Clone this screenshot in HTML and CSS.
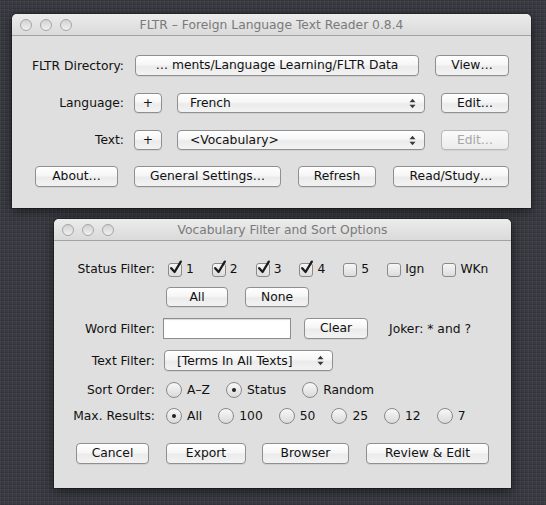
FILE: index.html
```html
<!DOCTYPE html>
<html>
<head>
<meta charset="utf-8">
<link rel="stylesheet" href="styles.css">
</head>
<body>
<div class="desktop">
  <div class="window w1">
    <div class="titlebar">
      <div class="lights"><span></span><span></span><span></span></div>
      <div class="title">FLTR – Foreign Language Text Reader 0.8.4</div>
    </div>
    <div class="content c1">
      <div class="row">
        <div class="lbl l1">FLTR Directory:</div>
        <div class="btn path">… ments/Language Learning/FLTR Data</div>
        <div class="btn view">View…</div>
      </div>
      <div class="row">
        <div class="lbl l1">Language:</div>
        <div class="btn plus">+</div>
        <div class="combo c-lang"><span>French</span><svg class="arr" width="7" height="11" viewBox="0 0 7 11"><path d="M0.5 4.2 L3.5 0.8 L6.5 4.2 Z M0.5 6.8 L3.5 10.2 L6.5 6.8 Z" fill="#3a3a3a"/></svg></div>
        <div class="btn edit">Edit…</div>
      </div>
      <div class="row">
        <div class="lbl l1">Text:</div>
        <div class="btn plus">+</div>
        <div class="combo c-lang"><span>&lt;Vocabulary&gt;</span><svg class="arr" width="7" height="11" viewBox="0 0 7 11"><path d="M0.5 4.2 L3.5 0.8 L6.5 4.2 Z M0.5 6.8 L3.5 10.2 L6.5 6.8 Z" fill="#3a3a3a"/></svg></div>
        <div class="btn edit disabled">Edit…</div>
      </div>
      <div class="row">
        <div class="btn about">About…</div>
        <div class="btn general">General Settings…</div>
        <div class="btn refresh">Refresh</div>
        <div class="btn read">Read/Study…</div>
      </div>
    </div>
  </div>

  <div class="window w2">
    <div class="titlebar">
      <div class="lights"><span></span><span></span><span></span></div>
      <div class="title">Vocabulary Filter and Sort Options</div>
    </div>
    <div class="content c2">
      <div class="row r-status">
        <div class="lbl l2">Status Filter:</div>
        <div class="checks">
          <label class="ck"><span class="cb on"><svg viewBox="0 0 16 16" width="16" height="16"><path d="M3.2 8.2 L6.6 12 L12.8 1.6" fill="none" stroke="#1c1c1c" stroke-width="2.3" stroke-linecap="round" stroke-linejoin="round"/></svg></span>1</label>
          <label class="ck"><span class="cb on"><svg viewBox="0 0 16 16" width="16" height="16"><path d="M3.2 8.2 L6.6 12 L12.8 1.6" fill="none" stroke="#1c1c1c" stroke-width="2.3" stroke-linecap="round" stroke-linejoin="round"/></svg></span>2</label>
          <label class="ck"><span class="cb on"><svg viewBox="0 0 16 16" width="16" height="16"><path d="M3.2 8.2 L6.6 12 L12.8 1.6" fill="none" stroke="#1c1c1c" stroke-width="2.3" stroke-linecap="round" stroke-linejoin="round"/></svg></span>3</label>
          <label class="ck"><span class="cb on"><svg viewBox="0 0 16 16" width="16" height="16"><path d="M3.2 8.2 L6.6 12 L12.8 1.6" fill="none" stroke="#1c1c1c" stroke-width="2.3" stroke-linecap="round" stroke-linejoin="round"/></svg></span>4</label>
          <label class="ck"><span class="cb"></span>5</label>
          <label class="ck"><span class="cb"></span>Ign</label>
          <label class="ck"><span class="cb"></span>WKn</label>
        </div>
      </div>
      <div class="row r-allnone">
        <div class="btn all">All</div>
        <div class="btn none">None</div>
      </div>
      <div class="row r-word">
        <div class="lbl l2">Word Filter:</div>
        <div class="field"></div>
        <div class="btn clear">Clear</div>
        <div class="joker">Joker: * and ?</div>
      </div>
      <div class="row r-text">
        <div class="lbl l2">Text Filter:</div>
        <div class="combo c-text"><span>[Terms In All Texts]</span><svg class="arr" width="7" height="11" viewBox="0 0 7 11"><path d="M0.5 4.2 L3.5 0.8 L6.5 4.2 Z M0.5 6.8 L3.5 10.2 L6.5 6.8 Z" fill="#3a3a3a"/></svg></div>
      </div>
      <div class="row r-sort">
        <div class="lbl l2">Sort Order:</div>
        <div class="radios">
          <label class="rd"><span class="rb"></span>A–Z</label>
          <label class="rd"><span class="rb on"></span>Status</label>
          <label class="rd"><span class="rb"></span>Random</label>
        </div>
      </div>
      <div class="row r-max">
        <div class="lbl l2">Max. Results:</div>
        <div class="radios">
          <label class="rd"><span class="rb on"></span>All</label>
          <label class="rd"><span class="rb"></span>100</label>
          <label class="rd"><span class="rb"></span>50</label>
          <label class="rd"><span class="rb"></span>25</label>
          <label class="rd"><span class="rb"></span>12</label>
          <label class="rd"><span class="rb"></span>7</label>
        </div>
      </div>
      <div class="row r-buttons">
        <div class="btn cancel">Cancel</div>
        <div class="btn export">Export</div>
        <div class="btn browser">Browser</div>
        <div class="btn review">Review &amp; Edit</div>
      </div>
    </div>
  </div>
</div>
</body>
</html>
```
FILE: styles.css
```css
* { box-sizing: border-box; }
html, body { margin: 0; padding: 0; }
body {
  width: 546px;
  height: 505px;
  overflow: hidden;
  font-family: "DejaVu Sans", "Liberation Sans", sans-serif;
  font-size: 12px;
  color: #111;
}
.desktop {
  position: relative;
  width: 546px;
  height: 505px;
  background-color: #393b42;
  background-image:
    repeating-linear-gradient(90deg, rgba(255,255,255,0.03) 0 1px, rgba(0,0,0,0.05) 1px 2px, transparent 2px 4px),
    repeating-linear-gradient(0deg, rgba(0,0,0,0.1) 0 1px, transparent 1px 3px, rgba(255,255,255,0.025) 3px 4px);
}
.window {
  position: absolute;
  background: #dfdfdf;
  border-radius: 5px 5px 0 0;
  box-shadow: 0 3px 12px rgba(0,0,0,0.55), 0 0 0 1px rgba(0,0,0,0.25);
  overflow: hidden;
}
.w1 { left: 12px; top: 14px; width: 519px; height: 194px; }
.w2 { left: 54px; top: 219px; width: 457px; height: 269px; }

.titlebar {
  position: relative;
  height: 22px;
  border-bottom: 1px solid #a3a3a3;
  background: linear-gradient(#ececec, #dadada);
  display: flex;
  align-items: center;
  justify-content: center;
}
.title {
  color: #7a7a7a;
  font-size: 12.3px;
  padding-top: 1px;
}
.lights {
  position: absolute;
  left: 8px;
  top: 5px;
  display: flex;
  gap: 8px;
}
.lights span {
  width: 12px;
  height: 12px;
  border-radius: 50%;
  border: 1px solid #a4a4a4;
  background: linear-gradient(#d2d2d2, #f0f0f0);
}

.content { display: flex; flex-direction: column; }
.c1 { padding-top: 19px; gap: 16px; }
.row { display: flex; align-items: center; height: 21px; }
.lbl { text-align: right; flex: none; white-space: nowrap; font-size: 12.3px; }
.l1 { width: 112px; }
.l2 { width: 101px; }

.btn {
  flex: none;
  height: 21px;
  border: 1px solid #8f8f8f;
  border-radius: 4px;
  background: linear-gradient(#ffffff 0%, #f6f6f6 45%, #ebebeb 55%, #f3f3f3 100%);
  box-shadow: 0 1px 0 rgba(0,0,0,0.06);
  text-align: center;
  line-height: 19px;
  font-size: 12.3px;
  color: #111;
  white-space: nowrap;
}
.btn.disabled { color: #a6a6a6; border-color: #b8b8b8; background: linear-gradient(#fafafa, #ececec); }

.path { margin-left: 11px; width: 284px; }
.view { margin-left: 16px; width: 74px; }
.plus { margin-left: 10px; width: 28px; height: 20px; line-height: 18px; }
.combo {
  flex: none;
  position: relative;
  height: 20px;
  border: 1px solid #8f8f8f;
  border-radius: 4px;
  background: linear-gradient(#ffffff 0%, #f6f6f6 45%, #ebebeb 55%, #f3f3f3 100%);
  box-shadow: 0 1px 0 rgba(0,0,0,0.06);
  display: flex;
  align-items: center;
  font-size: 12.3px;
  padding-left: 12px;
}
.combo .arr { position: absolute; right: 8px; top: 4px; }
.c-lang { margin-left: 15px; width: 248px; }
.edit { margin-left: 16px; width: 68px; height: 20px; line-height: 18px; }

.about { margin-left: 23px; width: 83px; }
.general { margin-left: 16px; width: 147px; }
.refresh { margin-left: 17px; width: 78px; }
.read { margin-left: 17px; width: 116px; }

/* window 2 */
.c2 { padding-top: 18px; }
.r-status { height: 20px; }
.checks { display: flex; align-items: center; margin-left: 13px; }
.ck { display: flex; align-items: center; margin-right: 18px; }
.cb {
  position: relative;
  width: 14px;
  height: 14px;
  border: 1px solid #8a8a8a;
  border-radius: 3px;
  background: linear-gradient(#f6f6f6, #dcdcdc);
  margin-right: 4px;
  margin-top: 1px;
}
.cb svg { position: absolute; left: -1px; top: -4px; overflow: visible; }

.r-allnone { margin-top: 8px; height: 20px; }
.all { margin-left: 112px; width: 62px; height: 20px; line-height: 18px; }
.none { margin-left: 17px; width: 64px; height: 20px; line-height: 18px; }

.r-word { margin-top: 11px; }
.field {
  flex: none;
  margin-left: 8px;
  width: 128px;
  height: 21px;
  background: #fff;
  border: 1px solid #8d8d8d;
  box-shadow: inset 0 1px 1px rgba(0,0,0,0.15);
}
.clear { margin-left: 13px; width: 64px; }
.joker { margin-left: 21px; font-size: 12.3px; }

.r-text { margin-top: 11px; }
.c-text { margin-left: 9px; width: 169px; height: 21px; }

.r-sort { margin-top: 9px; height: 20px; }
.r-max { margin-top: 6px; height: 20px; }
.radios { display: flex; align-items: center; margin-left: 11px; }
.rd { display: flex; align-items: center; margin-right: 16px; font-size: 12.3px; }
.lbl, .ck, .rd { font-size: 12.3px; }
.rb {
  position: relative;
  width: 16px;
  height: 16px;
  border-radius: 50%;
  border: 1px solid #8a8a8a;
  background: linear-gradient(#f8f8f8, #dadada);
  margin-right: 5px;
}
.rb.on::after {
  content: "";
  position: absolute;
  left: 5px;
  top: 5px;
  width: 4px;
  height: 4px;
  border-radius: 50%;
  background: #222;
}

.r-buttons { margin-top: 17px; }
.cancel { margin-left: 22px; width: 73px; }
.export { margin-left: 17px; width: 80px; }
.browser { margin-left: 16px; width: 87px; }
.review { margin-left: 17px; width: 123px; }
```
